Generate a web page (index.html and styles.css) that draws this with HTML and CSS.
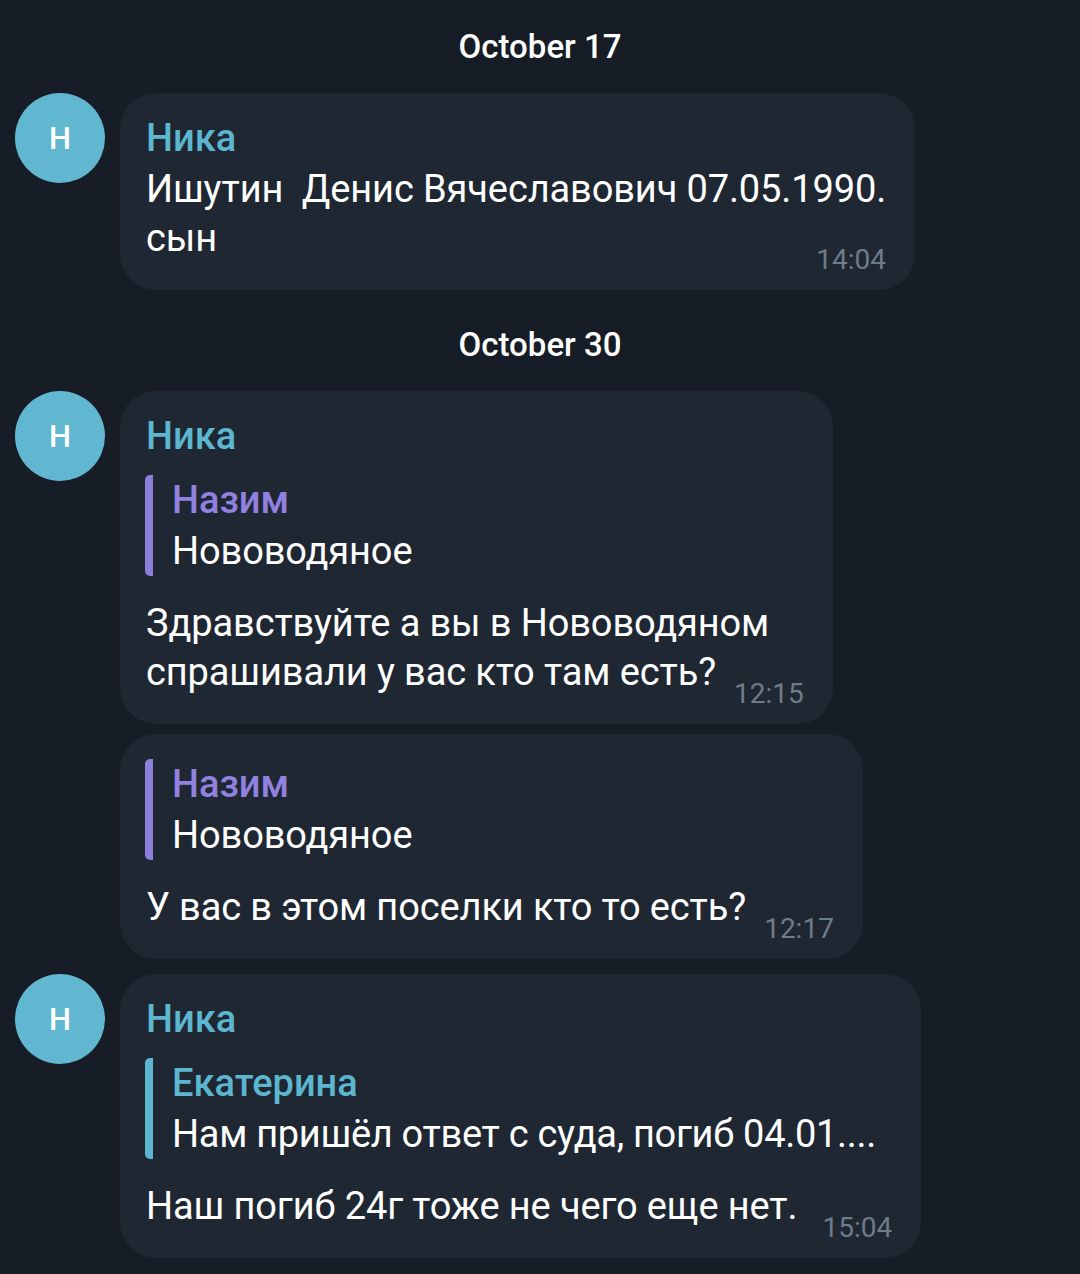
FILE: index.html
```html
<!DOCTYPE html>
<html lang="ru">
<head>
<meta charset="utf-8">
<link rel="stylesheet" href="styles.css">
</head>
<body>
<div class="chat">
  <div class="date">October 17</div>
  <div class="group">
    <div class="avatar">Н</div>
    <div class="stack">
      <div class="bubble">
        <div class="name">Ника</div>
        <div class="body">Ишутин&nbsp; Денис Вячеславович 07.05.1990.<br>сын<span class="time">14:04</span></div>
      </div>
    </div>
  </div>

  <div class="date">October 30</div>
  <div class="group">
    <div class="avatar">Н</div>
    <div class="stack">
      <div class="bubble">
        <div class="name">Ника</div>
        <div class="quote quote-purple">
          <div class="qname">Назим</div>
          <div class="qtext">Нововодяное</div>
        </div>
        <div class="body">Здравствуйте а вы в Нововодяном<br>спрашивали у вас кто там есть?<span class="time">12:15</span></div>
      </div>
      <div class="bubble bubble-plain">
        <div class="quote quote-purple quote-first">
          <div class="qname">Назим</div>
          <div class="qtext">Нововодяное</div>
        </div>
        <div class="body">У вас в этом поселки кто то есть?<span class="time">12:17</span></div>
      </div>
    </div>
  </div>

  <div class="group group-next">
    <div class="avatar">Н</div>
    <div class="stack">
      <div class="bubble">
        <div class="name">Ника</div>
        <div class="quote quote-teal">
          <div class="qname">Екатерина</div>
          <div class="qtext qtext-tight">Нам пришёл ответ с суда, погиб 04.01....</div>
        </div>
        <div class="body">Наш погиб 24г тоже не чего еще нет.<span class="time time-wide">15:04</span></div>
      </div>
    </div>
  </div>
</div>
</body>
</html>
```

FILE: styles.css
```css
html, body {
  margin: 0;
  padding: 0;
  background: #161d26;
}
body {
  width: 1080px;
  height: 1274px;
  overflow: hidden;
  font-family: Roboto, "Noto Sans", sans-serif;
  color: #ffffff;
}
.chat {
  display: flex;
  flex-direction: column;
  padding: 27px 0 0 15px;
}
.date {
  align-self: center;
  margin-left: -15px;
  font-size: 33px;
  font-weight: 500;
  line-height: 40px;
  color: #ffffff;
  margin-bottom: 26px;
}
.group {
  display: flex;
  gap: 15px;
  align-items: flex-start;
  margin-bottom: 35px;
}
.group-next {
  margin-top: -20px;
}
.avatar {
  flex: none;
  width: 90px;
  height: 90px;
  border-radius: 50%;
  background: #62b7d0;
  color: #ffffff;
  display: flex;
  align-items: center;
  justify-content: center;
  font-size: 31px;
  font-weight: 500;
}
.stack {
  display: flex;
  flex-direction: column;
  align-items: flex-start;
  gap: 10px;
}
.bubble {
  display: flow-root;
  background: #1e2732;
  border-radius: 36px;
  padding: 21px 29px 14px 26px;
}
.bubble-plain {
  padding-top: 25px;
}
.name {
  font-size: 38px;
  font-weight: 500;
  line-height: 48px;
  color: #5db6cf;
  margin-bottom: 3px;
}
.body {
  font-size: 38px;
  line-height: 49px;
  letter-spacing: -0.12px;
  white-space: nowrap;
}
.time {
  float: right;
  font-size: 28px;
  line-height: 32px;
  letter-spacing: 0;
  color: #6e7c89;
  margin: 30px 0 0 18px;
}
.time-wide {
  margin-left: 25px;
}
.quote {
  border-left: 8px solid #8f7fdd;
  border-radius: 5px;
  padding-left: 19px;
  margin: 15px 0 23px -1px;
}
.quote-first {
  margin-top: 0;
}
.quote-purple {
  border-left-color: #8f7fdd;
}
.quote-teal {
  border-left-color: #5db6cf;
}
.qname {
  font-size: 38px;
  font-weight: 500;
  line-height: 50.5px;
}
.quote-purple .qname {
  color: #9282e0;
}
.quote-teal .qname {
  color: #5db6cf;
}
.qtext {
  font-size: 38px;
  line-height: 50.5px;
  letter-spacing: -0.12px;
}
.qtext-tight {
  letter-spacing: -0.3px;
}
```
